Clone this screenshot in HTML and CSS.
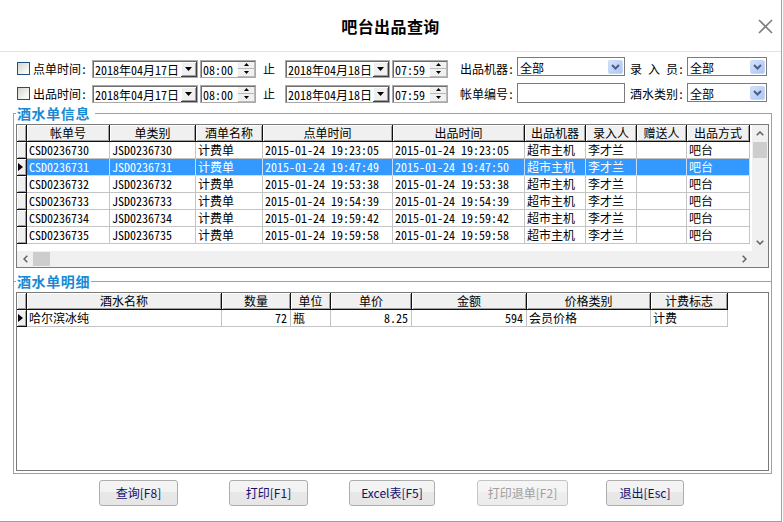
FILE: index.html
```html
<!DOCTYPE html>
<html lang="zh-CN">
<head>
<meta charset="utf-8">
<title>吧台出品查询</title>
<link rel="stylesheet" href="styles.css">
</head>
<body>
<div class="win">
  <header class="titlebar">
    <span></span>
    <h1 class="title">吧台出品查询</h1>
    <svg class="close" width="15" height="15" viewBox="0 0 15 15"><path d="M1 1L14 14M14 1L1 14" stroke="#7d7d7d" stroke-width="1.6" fill="none"/></svg>
  </header>

  <div class="filters">
    <div class="frow">
      <span class="chk"></span>
      <span class="lbl lb-first">点单时间:</span>
      <div class="date da"><span class="val">2018年04月17日</span><span class="ddbtn"><svg width="7" height="4" viewBox="0 0 7 4"><path d="M0 0H7L3.5 4Z" fill="#000"/></svg></span></div>
      <div class="time"><span class="val">08:00</span><span class="spin"><span class="sp"><svg width="5" height="3" viewBox="0 0 5 3"><path d="M0 3H5L2.5 0Z" fill="#000"/></svg></span><span class="sp"><svg width="5" height="3" viewBox="0 0 5 3"><path d="M0 0H5L2.5 3Z" fill="#000"/></svg></span></span></div>
      <span class="zhi">止</span>
      <div class="date db"><span class="val">2018年04月18日</span><span class="ddbtn"><svg width="7" height="4" viewBox="0 0 7 4"><path d="M0 0H7L3.5 4Z" fill="#000"/></svg></span></div>
      <div class="time"><span class="val">07:59</span><span class="spin"><span class="sp"><svg width="5" height="3" viewBox="0 0 5 3"><path d="M0 3H5L2.5 0Z" fill="#000"/></svg></span><span class="sp"><svg width="5" height="3" viewBox="0 0 5 3"><path d="M0 0H5L2.5 3Z" fill="#000"/></svg></span></span></div>
      <span class="lbl lb-mid">出品机器:</span>
      <div class="combo cw up1"><span class="val">全部</span><span class="cbtn"><svg width="9" height="6" viewBox="0 0 9 6"><path d="M1 1L4.5 4.5L8 1" stroke="#4a5f86" stroke-width="2" fill="none"/></svg></span></div>
      <span class="lbl lb-right">录 入 员:</span>
      <div class="combo cn up1"><span class="val">全部</span><span class="cbtn"><svg width="9" height="6" viewBox="0 0 9 6"><path d="M1 1L4.5 4.5L8 1" stroke="#4a5f86" stroke-width="2" fill="none"/></svg></span></div>
    </div>
    <div class="frow">
      <span class="chk"></span>
      <span class="lbl lb-first">出品时间:</span>
      <div class="date da"><span class="val">2018年04月17日</span><span class="ddbtn"><svg width="7" height="4" viewBox="0 0 7 4"><path d="M0 0H7L3.5 4Z" fill="#000"/></svg></span></div>
      <div class="time"><span class="val">08:00</span><span class="spin"><span class="sp"><svg width="5" height="3" viewBox="0 0 5 3"><path d="M0 3H5L2.5 0Z" fill="#000"/></svg></span><span class="sp"><svg width="5" height="3" viewBox="0 0 5 3"><path d="M0 0H5L2.5 3Z" fill="#000"/></svg></span></span></div>
      <span class="zhi">止</span>
      <div class="date db"><span class="val">2018年04月18日</span><span class="ddbtn"><svg width="7" height="4" viewBox="0 0 7 4"><path d="M0 0H7L3.5 4Z" fill="#000"/></svg></span></div>
      <div class="time"><span class="val">07:59</span><span class="spin"><span class="sp"><svg width="5" height="3" viewBox="0 0 5 3"><path d="M0 3H5L2.5 0Z" fill="#000"/></svg></span><span class="sp"><svg width="5" height="3" viewBox="0 0 5 3"><path d="M0 0H5L2.5 3Z" fill="#000"/></svg></span></span></div>
      <span class="lbl lb-mid">帐单编号:</span>
      <div class="input cw up2"></div>
      <span class="lbl lb-right">酒水类别:</span>
      <div class="combo cn up2"><span class="val">全部</span><span class="cbtn"><svg width="9" height="6" viewBox="0 0 9 6"><path d="M1 1L4.5 4.5L8 1" stroke="#4a5f86" stroke-width="2" fill="none"/></svg></span></div>
    </div>
  </div>

  <section class="group">
    <div class="gtitle"><span class="glabel">酒水单信息</span></div>

    <div class="grid g1">
      <div class="gmain">
        <div class="gtable">
          <div class="row r1 hrow">
            <span class="ic"></span>
            <span class="hc">帐单号</span><span class="hc">单类别</span><span class="hc">酒单名称</span><span class="hc">点单时间</span><span class="hc">出品时间</span><span class="hc">出品机器</span><span class="hc">录入人</span><span class="hc">赠送人</span><span class="hc">出品方式</span>
          </div>
          <div class="row r1">
            <span class="ic"></span>
            <span class="c">CSD0236730</span><span class="c">JSD0236730</span><span class="c">计费单</span><span class="c">2015-01-24 19:23:05</span><span class="c">2015-01-24 19:23:05</span><span class="c">超市主机</span><span class="c">李才兰</span><span class="c"></span><span class="c">吧台</span>
          </div>
          <div class="row r1 sel">
            <span class="ic"><i class="ptr"></i></span>
            <span class="c">CSD0236731</span><span class="c">JSD0236731</span><span class="c">计费单</span><span class="c">2015-01-24 19:47:49</span><span class="c">2015-01-24 19:47:50</span><span class="c">超市主机</span><span class="c">李才兰</span><span class="c"></span><span class="c">吧台</span>
          </div>
          <div class="row r1">
            <span class="ic"></span>
            <span class="c">CSD0236732</span><span class="c">JSD0236732</span><span class="c">计费单</span><span class="c">2015-01-24 19:53:38</span><span class="c">2015-01-24 19:53:38</span><span class="c">超市主机</span><span class="c">李才兰</span><span class="c"></span><span class="c">吧台</span>
          </div>
          <div class="row r1">
            <span class="ic"></span>
            <span class="c">CSD0236733</span><span class="c">JSD0236733</span><span class="c">计费单</span><span class="c">2015-01-24 19:54:39</span><span class="c">2015-01-24 19:54:39</span><span class="c">超市主机</span><span class="c">李才兰</span><span class="c"></span><span class="c">吧台</span>
          </div>
          <div class="row r1">
            <span class="ic"></span>
            <span class="c">CSD0236734</span><span class="c">JSD0236734</span><span class="c">计费单</span><span class="c">2015-01-24 19:59:42</span><span class="c">2015-01-24 19:59:42</span><span class="c">超市主机</span><span class="c">李才兰</span><span class="c"></span><span class="c">吧台</span>
          </div>
          <div class="row r1">
            <span class="ic"></span>
            <span class="c">CSD0236735</span><span class="c">JSD0236735</span><span class="c">计费单</span><span class="c">2015-01-24 19:59:58</span><span class="c">2015-01-24 19:59:58</span><span class="c">超市主机</span><span class="c">李才兰</span><span class="c"></span><span class="c">吧台</span>
          </div>
        </div>
        <div class="vscroll">
          <span class="sbtn vb"><svg width="8" height="5" viewBox="0 0 8 5"><path d="M0.7 4.3L4 1L7.3 4.3" fill="none" stroke="#606060" stroke-width="1.5"/></svg></span>
          <span class="vthumb"></span>
          <span class="track"></span>
          <span class="sbtn vb"><svg width="8" height="5" viewBox="0 0 8 5"><path d="M0.7 0.7L4 4L7.3 0.7" fill="none" stroke="#606060" stroke-width="1.5"/></svg></span>
        </div>
      </div>
      <div class="hscroll">
        <span class="sbtn hb"><svg width="5" height="8" viewBox="0 0 5 8"><path d="M4.3 0.7L1 4L4.3 7.3" fill="none" stroke="#606060" stroke-width="1.5"/></svg></span>
        <span class="hthumb"></span>
        <span class="track"></span>
        <span class="sbtn hb"><svg width="5" height="8" viewBox="0 0 5 8"><path d="M0.7 0.7L4 4L0.7 7.3" fill="none" stroke="#606060" stroke-width="1.5"/></svg></span>
        <span class="corner"></span>
      </div>
    </div>

    <div class="sub"><span class="tick"></span><span class="glabel">酒水单明细</span><span class="line"></span></div>

    <div class="grid g2">
      <div class="row r2 hrow">
        <span class="ic"></span>
        <span class="hc">酒水名称</span><span class="hc">数量</span><span class="hc">单位</span><span class="hc">单价</span><span class="hc">金额</span><span class="hc">价格类别</span><span class="hc">计费标志</span>
      </div>
      <div class="row r2">
        <span class="ic"><i class="ptr"></i></span>
        <span class="c">哈尔滨冰纯</span><span class="c num">72</span><span class="c">瓶</span><span class="c num">8.25</span><span class="c num">594</span><span class="c">会员价格</span><span class="c">计费</span>
      </div>
    </div>
  </section>

  <div class="btns">
    <button class="btn b1">查询[F8]</button>
    <button class="btn b2">打印[F1]</button>
    <button class="btn b3">Excel表[F5]</button>
    <button class="btn b4" disabled>打印退单[F2]</button>
    <button class="btn b5">退出[Esc]</button>
  </div>
</div>
</body>
</html>
```

FILE: styles.css
```css
html, body {
  margin: 0;
  padding: 0;
  background: #fff;
}
body {
  font-family: "Noto Sans Mono CJK SC", "Noto Sans CJK SC", sans-serif;
  font-size: 12px;
  line-height: 14px;
  color: #000;
}
.win {
  width: 782px;
  height: 522px;
  box-sizing: border-box;
  border-right: 1px solid #a0a0a0;
  border-bottom: 1px solid #a0a0a0;
  background: #fff;
  display: flex;
  flex-direction: column;
}

/* title bar */
.titlebar {
  height: 52px;
  box-sizing: border-box;
  border-bottom: 1px solid #e3e3e3;
  display: grid;
  grid-template-columns: 1fr auto 1fr;
  align-items: center;
  flex: none;
}
.title {
  margin: 0;
  font-family: "Noto Sans CJK SC", sans-serif;
  font-size: 16px;
  font-weight: bold;
  line-height: 20px;
  letter-spacing: 0.4px;
}
.close {
  justify-self: end;
  margin-right: 8px;
  margin-top: 2px;
}

/* filters */
.filters {
  padding: 4px 0 0 17px;
  flex: none;
}
.frow {
  display: flex;
  align-items: center;
  height: 25px;
}
.chk {
  flex: none;
  width: 13px;
  height: 13px;
  box-sizing: border-box;
  border: 1px solid #1c5180;
  background: linear-gradient(135deg, #d4d4cf 0%, #f4f4f2 70%, #fff 100%);
}
.lbl {
  flex: none;
  width: 54px;
  white-space: pre;
  overflow: visible;
}
.lb-first { margin-left: 3px; }
.lb-mid { margin-left: 12px; }
.lb-right { margin-left: 5px; }
.zhi {
  flex: none;
  width: 12px;
  margin-left: 7px;
}

.date, .time {
  flex: none;
  height: 18px;
  box-sizing: border-box;
  border: 1px solid #a9a9a9;
  box-shadow: inset 1px 1px 0 #6d6d6d;
  display: flex;
  align-items: stretch;
  background: #fff;
}
.date { margin-left: 5px; width: 106px; }
.date.db { margin-left: 10px; width: 105px; }
.time { margin-left: 2px; width: 56px; }
.val {
  flex: 1;
  padding-left: 2px;
  padding-top: 1px;
  line-height: 15px;
  white-space: nowrap;
  overflow: hidden;
}
.time .val { padding-left: 2px; }
.ddbtn {
  flex: none;
  width: 16px;
  box-sizing: border-box;
  margin-top: 1px;
  background: #f0f0f0;
  border-right: 1px solid #404040;
  border-bottom: 1px solid #404040;
  box-shadow: inset 1px 1px 0 #fff, inset -1px -1px 0 #a0a0a0;
  display: flex;
  align-items: center;
  justify-content: center;
}
.spin {
  flex: none;
  width: 17px;
  margin: 1px 0 0;
  display: flex;
  flex-direction: column;
  background: #f0f0f0;
}
.sp {
  flex: 1;
  display: flex;
  align-items: center;
  justify-content: center;
  border-bottom: 1px solid #b8b8b8;
  border-right: 1px solid #b8b8b8;
}

.combo, .input {
  flex: none;
  height: 19px;
  box-sizing: border-box;
  border: 1px solid #7b7b7b;
  background: #fff;
  display: flex;
  align-items: stretch;
  margin-left: 3px;
}
.cw { width: 108px; }
.cn { width: 80px; }
.input { height: 20px; }
.up1 { margin-bottom: 4px; }
.up2 { margin-bottom: 2px; }
.combo .val { padding-left: 2px; padding-top: 2px; }
.cbtn {
  flex: none;
  width: 15px;
  margin: 1px;
  margin-top: 2px;
  box-sizing: border-box;
  border: 1px solid #c7d7f6;
  border-radius: 2px;
  background: linear-gradient(135deg, #d6e2fb 0%, #bcd0f7 60%, #b0c6f3 100%);
  display: flex;
  align-items: center;
  justify-content: center;
}

/* group box */
.group {
  flex: none;
  margin: 7px 0 0 13px;
  width: 759px;
  box-sizing: border-box;
  border: 1px solid #a0a0a0;
  padding: 0 2px 2px;
}
.gtitle {
  margin-top: -9px;
  height: 16px;
  display: flex;
}
.glabel {
  background: #fff;
  padding: 0 5px 0 1px;
  font-family: "Noto Sans CJK SC", sans-serif;
  font-size: 14px;
  font-weight: bold;
  line-height: 16px;
  letter-spacing: 0.6px;
  color: #1a8ad2;
}
.sub {
  display: flex;
  align-items: center;
  height: 22px;
  padding-top: 2px;
  margin: 0 -2px;
}
.sub .tick {
  width: 2px;
  height: 1px;
  background: #a0a0a0;
}
.sub .glabel { padding: 0 1px 0 1px; }
.sub .line {
  flex: 1;
  height: 1px;
  background: #a0a0a0;
}

/* grids */
.grid {
  width: 753px;
  box-sizing: border-box;
  border: 1px solid #7a7a7a;
  background: #fff;
}
.g1 { margin-top: 3px; height: 144px; }
.g2 { height: 179px; }
.gmain {
  display: flex;
  height: 126px;
}
.gtable {
  flex: 1;
  background: #fff;
}
.row {
  display: grid;
  height: 17px;
}
.r1 { grid-template-columns: 10px 83px 86px 67px 130px 132px 61px 51px 50px 63px; }
.r2 { grid-template-columns: 10px 195px 69px 40px 81px 115px 124px 77px; }
.hc, .c, .ic {
  box-sizing: border-box;
  white-space: nowrap;
  overflow: hidden;
  line-height: 16px;
}
.hc {
  background: #f0f0f0;
  border-right: 1px solid #101010;
  border-bottom: 1px solid #101010;
  box-shadow: inset 1px 1px 0 #fff, inset -1px -1px 0 #a0a0a0;
  text-align: center;
}
.ic {
  background: #f0f0f0;
  border-right: 1px solid #101010;
  border-bottom: 1px solid #101010;
  box-shadow: inset 1px 1px 0 #fff, inset -1px -1px 0 #a0a0a0;
  display: flex;
  align-items: center;
  padding-left: 1px;
}
.c {
  border-right: 1px solid #c4c4c4;
  border-bottom: 1px solid #c4c4c4;
  padding-left: 2px;
}
.c.num {
  text-align: right;
  padding-right: 3px;
}
.sel .c {
  background: #3399ff;
  color: #fff;
  border-color: #c8dcf5;
}
.ptr {
  display: block;
  width: 0;
  height: 0;
  border-left: 5px solid #000;
  border-top: 4px solid transparent;
  border-bottom: 4px solid transparent;
}

/* scrollbars */
.vscroll {
  flex: none;
  width: 16px;
  background: #f0f0f0;
  display: flex;
  flex-direction: column;
}
.sbtn {
  flex: none;
  display: flex;
  align-items: center;
  justify-content: center;
}
.vb { height: 17px; }
.vthumb {
  flex: none;
  height: 16px;
  margin: 0 1px;
  background: #cdcdcd;
}
.track { flex: 1; }
.hscroll {
  display: flex;
  height: 16px;
  background: #f0f0f0;
}
.hb { width: 16px; }
.hthumb {
  flex: none;
  width: 17px;
  margin: 1px 0;
  background: #cdcdcd;
}
.corner {
  flex: none;
  width: 16px;
  background: #f0f0f0;
}

/* buttons */
.btns {
  flex: none;
  display: flex;
  margin-top: 6px;
  height: 26px;
}
.btn {
  height: 26px;
  box-sizing: border-box;
  border: 1px solid #adadad;
  border-radius: 3px;
  background: linear-gradient(#f4f4f4 0%, #f2f2f2 45%, #e8e8e8 45%, #e6e6e6 100%);
  color: #111170;
  font-family: "Noto Sans CJK SC", sans-serif;
  font-size: 12px;
  line-height: 14px;
  padding: 0;
  display: flex;
  align-items: center;
  justify-content: center;
}
.btn:disabled {
  color: #a0a0a0;
  border-color: #c4c4c4;
  background: linear-gradient(#f6f6f6 0%, #f4f4f4 45%, #eeeeee 45%, #ececec 100%);
}
.b1 { margin-left: 99px; width: 79px; }
.b2 { margin-left: 51px; width: 79px; }
.b3 { margin-left: 41px; width: 86px; }
.b4 { margin-left: 42px; width: 91px; }
.b5 { margin-left: 38px; width: 78px; }
```
